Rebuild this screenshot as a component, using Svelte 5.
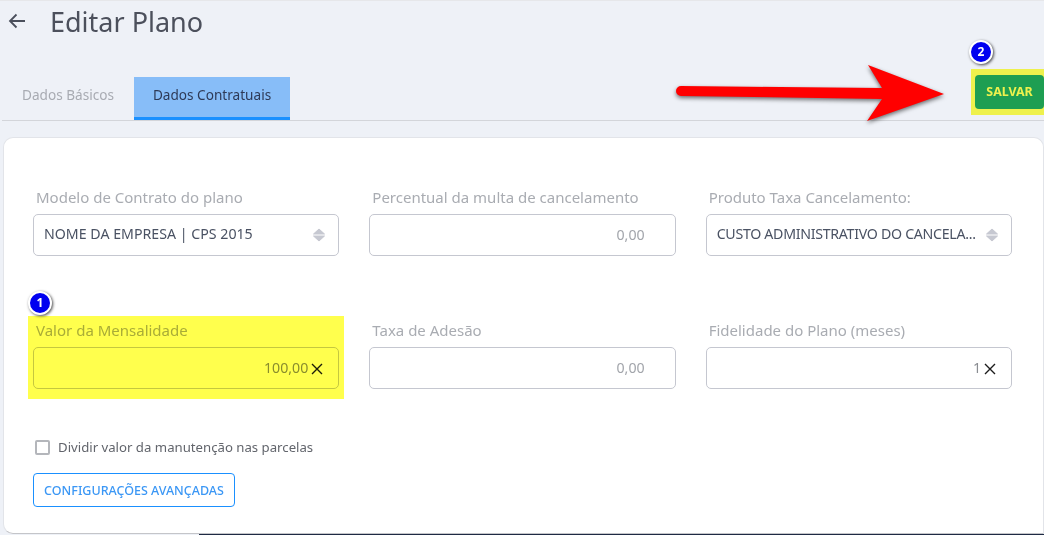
<script>
  const rows = [
    [
      { label: 'Modelo de Contrato do plano', type: 'select', value: 'NOME DA EMPRESA | CPS 2015' },
      { label: 'Percentual da multa de cancelamento', type: 'number', value: '0,00' },
      { label: 'Produto Taxa Cancelamento:', type: 'select', value: 'CUSTO ADMINISTRATIVO DO CANCELA...', tight: true }
    ],
    [
      { label: 'Valor da Mensalidade', type: 'number', value: '100,00', clear: true },
      { label: 'Taxa de Adesão', type: 'number', value: '0,00' },
      { label: 'Fidelidade do Plano (meses)', type: 'number', value: '1', clear: true }
    ]
  ];
</script>

<div class="page">
  <header class="title-row">
    <button class="back" aria-label="Voltar">
      <svg width="18" height="16" viewBox="0 0 18 16" fill="none" stroke="#4a4f5c" stroke-width="1.8">
        <path d="M17 8H2M8.5 1.5 2 8l6.5 6.5" />
      </svg>
    </button>
    <h1>Editar Plano</h1>
  </header>

  <div class="tabs-row">
    <nav class="tabs">
      <button class="tab">Dados Básicos</button>
      <button class="tab active">Dados Contratuais</button>
    </nav>
    <div class="save-mark">
      <button class="save">SALVAR</button>
    </div>
  </div>

  <main class="card">
    {#each rows as row}
      <div class="row">
        {#each row as field}
          <div class="field">
            <label for={field.label}>{field.label}</label>
            <div class="control">
              {#if field.type === 'select'}
                <div class="select" class:tight={field.tight} id={field.label}>{field.value}</div>
                <svg class="sort" width="14" height="14" viewBox="0 0 14 14" fill="#c6c8d1" stroke="#c6c8d1" stroke-width="1" stroke-linejoin="round">
                  <path d="M7 1 12.5 6H1.5zM1.5 8h11L7 13z" />
                </svg>
              {:else}
                <input id={field.label} class:with-clear={field.clear} value={field.value} />
                {#if field.clear}
                  <svg class="clear" width="12" height="12" viewBox="0 0 12 12" stroke="#1c1c1c" stroke-width="1.4">
                    <path d="M1 1l10 10M11 1 1 11" />
                  </svg>
                {/if}
              {/if}
            </div>
          </div>
        {/each}
      </div>
    {/each}

    <label class="check">
      <input type="checkbox" />
      <span>Dividir valor da manutenção nas parcelas</span>
    </label>

    <button class="advanced">CONFIGURAÇÕES AVANÇADAS</button>
  </main>

  <!-- annotations drawn on top of the screenshot -->
  <div class="mark-value"></div>
  <span class="badge badge-one">1</span>
  <span class="badge badge-two">2</span>
  <svg class="arrow" width="1044" height="535" viewBox="0 0 1044 535">
    <path fill="#ff0000" d="M681 86 882 88 868 65 944 94 867 121 882 99 681 96A5 5 0 0 1 681 86Z" />
  </svg>
  <div class="bottom-line"></div>
</div>

<style>
  :global(body) {
    margin: 0;
  }

  .page {
    position: relative;
    width: 1044px;
    height: 535px;
    overflow: hidden;
    background: #eef1f7;
    font-family: "Noto Sans", "Open Sans", sans-serif;
    box-sizing: border-box;
    border-top: 1px solid #e6e7ea;
  }

  button {
    font-family: inherit;
    cursor: pointer;
  }

  .title-row {
    display: flex;
    align-items: center;
    height: 40px;
    padding-left: 8px;
  }

  .back {
    display: flex;
    padding: 0;
    border: 0;
    background: none;
  }

  h1 {
    margin: 0 0 0 24px;
    font-size: 27px;
    font-weight: 400;
    color: #4c505c;
  }

  .tabs-row {
    display: flex;
    justify-content: space-between;
    margin: 34px 0 0 2px;
    height: 45px;
    border-bottom: 1px solid #d3d5da;
  }

  .tabs {
    display: flex;
    margin-top: 2px;
  }

  .tab {
    height: 43px;
    padding: 0 20px 6px;
    border: 0;
    border-bottom: 3px solid transparent;
    background: none;
    font-size: 13.6px;
    color: #a8abb2;
  }

  .tab.active {
    padding: 0 19px 6px;
    background: #87bdf8;
    border-bottom-color: #1a90ff;
    color: #2e3a57;
  }

  .save-mark {
    align-self: flex-start;
    margin-top: -6px;
    padding: 6px 0 6px 4px;
    background: #eef14d;
  }

  .save {
    display: block;
    width: 69px;
    height: 34px;
    padding: 0 0 2px;
    border: 0;
    border-radius: 4px;
    background: #1e9e52;
    color: #eef14d;
    font-size: 12.4px;
    font-weight: 700;
  }

  .card {
    margin: 16px 0 0 3px;
    height: 397px;
    box-sizing: border-box;
    padding: 49px 31px 0 29px;
    background: #fff;
    border: 1px solid #e2e4e9;
    border-bottom-color: #c4c5c9;
    border-radius: 10px 10px 0 10px;
  }

  .row {
    display: grid;
    grid-template-columns: repeat(3, minmax(0, 1fr));
    gap: 30px;
    height: 133px;
  }

  .field label {
    display: block;
    margin: 0 0 7px 3px;
    font-size: 15px;
    line-height: 20px;
    color: #a9acb2;
  }

  .control {
    position: relative;
  }

  .select,
  input:not([type]) {
    display: block;
    width: 100%;
    height: 42px;
    box-sizing: border-box;
    border: 1px solid #c5c7d0;
    border-radius: 5px;
    background: #fff;
    font-family: inherit;
    font-size: 14.2px;
    color: #4a5263;
  }

  .select {
    padding: 0 20px 0 10px;
    line-height: 38px;
    white-space: nowrap;
    overflow: hidden;
  }

  .select.tight {
    letter-spacing: -0.3px;
  }

  input:not([type]) {
    padding: 0 30px 2px 10px;
    text-align: right;
    color: #a2a5ab;
    outline: none;
  }

  input.with-clear {
    color: #8a8d92;
  }

  .sort {
    position: absolute;
    right: 13px;
    top: 14px;
  }

  .clear {
    position: absolute;
    right: 16px;
    top: 16px;
  }

  .check {
    display: flex;
    align-items: center;
    gap: 8px;
    margin: -16px 0 0 2px;
    font-size: 13.2px;
    line-height: 20px;
    color: #62656c;
  }

  .check input {
    appearance: none;
    width: 15px;
    height: 15px;
    margin: 0;
    border: 2px solid #b4b6bb;
    border-radius: 2px;
    background: #fff;
  }

  .advanced {
    display: block;
    width: 202px;
    height: 34px;
    margin-top: 16px;
    padding: 0;
    border: 1px solid #1a90ff;
    border-radius: 4px;
    background: #fff;
    color: #3b97f5;
    font-size: 12.5px;
    font-weight: 500;
  }

  .mark-value {
    position: absolute;
    left: 28px;
    top: 315px;
    width: 316px;
    height: 83px;
    background: #ffff4d;
    mix-blend-mode: multiply;
  }

  .badge {
    position: absolute;
    width: 20px;
    height: 20px;
    border: 2px solid #fff;
    border-radius: 50%;
    background: #0000f0;
    color: #fff;
    font-size: 12px;
    font-weight: 700;
    line-height: 20px;
    text-align: center;
    box-shadow: 1px 1px 3px rgba(0, 0, 0, 0.7);
  }

  .badge-one {
    left: 28px;
    top: 290px;
  }

  .badge-two {
    left: 969px;
    top: 39px;
  }

  .arrow {
    position: absolute;
    left: 0;
    top: -1px;
    filter: drop-shadow(0 2px 2px rgba(0, 0, 0, 0.55));
    pointer-events: none;
  }

  .bottom-line {
    position: absolute;
    left: 199px;
    right: 0;
    bottom: 0;
    height: 1px;
    background: #1e2a44;
  }
</style>
